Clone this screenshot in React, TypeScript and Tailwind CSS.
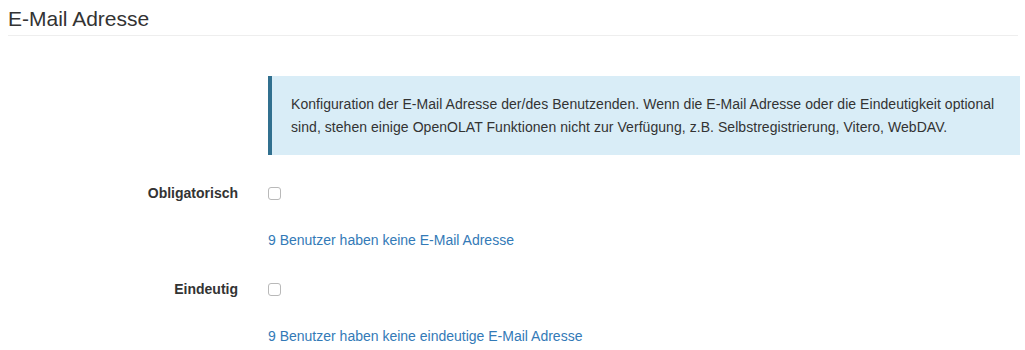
import React from 'react';

const Row = ({ label, hint, className }: { label: string; hint: string; className: string }) => (
    <div className={className}>
        <div className="grid grid-cols-[230px_1fr] gap-x-[30px] items-center">
            <label className="text-right font-bold leading-[20px]">{label}</label>
            <div className="h-[20px] flex items-center">
                <span className="block w-[13px] h-[13px] rounded-[3px] border border-[#b9b9b9] bg-white" />
            </div>
        </div>
        <div className="grid grid-cols-[230px_1fr] gap-x-[30px] mt-[27px]">
            <div />
            <a href="#" className="text-[#337ab7] leading-[20px]">{hint}</a>
        </div>
    </div>
);

export default function App() {
    return (
        <div className="px-[8px] text-[14px] text-[#333] font-['Liberation_Sans',Arial,sans-serif] bg-white h-[350px]">
            <h2 className="mt-[7px] pb-[4px] text-[21px] leading-[24px] border-b border-[#eeeeee] w-[1010px]">E-Mail Adresse</h2>

            <div className="grid grid-cols-[230px_1fr] gap-x-[30px] mt-[40px] w-[1012px]">
                <div />
                <div className="bg-[#d9edf7] border-l-[4px] border-[#31708f] pl-[19px] pr-[16px] pt-[17px] pb-[16px] leading-[23px] tracking-[0.05px]">
                    Konfiguration der E-Mail Adresse der/des Benutzenden. Wenn die E-Mail Adresse oder die Eindeutigkeit optional sind, stehen einige OpenOLAT Funktionen nicht zur Verfügung, z.B. Selbstregistrierung, Vitero, WebDAV.
                </div>
            </div>

            <Row className="mt-[28px]" label="Obligatorisch" hint="9 Benutzer haben keine E-Mail Adresse" />
            <Row className="mt-[29px]" label="Eindeutig" hint="9 Benutzer haben keine eindeutige E-Mail Adresse" />
        </div>
    );
}
